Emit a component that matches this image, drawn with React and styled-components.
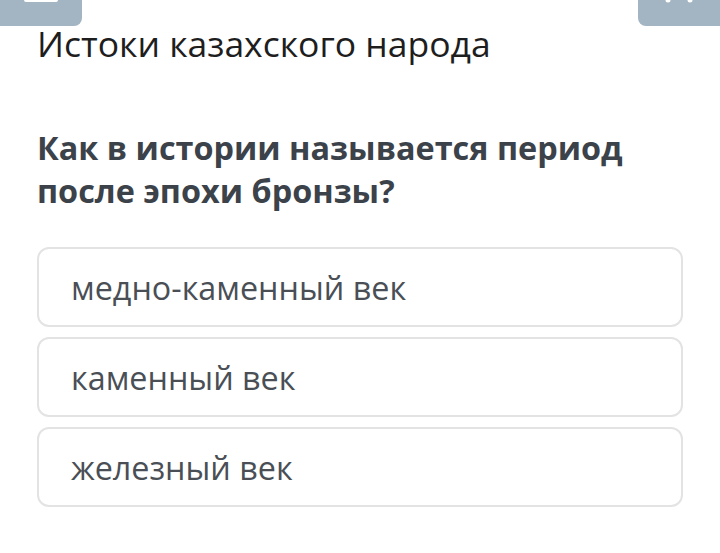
import React from 'react'
import styled, { createGlobalStyle } from 'styled-components'

const GlobalStyle = createGlobalStyle`
  body {
    margin: 0;
    background: #ffffff;
    font-family: "Open Sans", "Noto Sans", sans-serif;
  }
`

const options = ['медно-каменный век', 'каменный век', 'железный век']

const App = () => {
  return (
    <Page>
      <GlobalStyle />
      <TopBar>
        <NavButton side="left">
          <svg width="34" height="26" viewBox="0 0 34 26">
            <rect x="0" y="-2" width="34" height="4" rx="2" fill="#fff" />
          </svg>
        </NavButton>
        <NavButton side="right">
          <svg width="30" height="26" viewBox="0 0 30 26">
            <circle cx="4" cy="0" r="2.5" fill="#fff" />
            <circle cx="26" cy="0" r="2.5" fill="#fff" />
          </svg>
        </NavButton>
      </TopBar>
      <Content>
        <Title>Истоки казахского народа</Title>
        <Question>Как в истории называется период после эпохи бронзы?</Question>
        <OptionList>
          {options.map((o, i) => (
            <Option key={i}>{o}</Option>
          ))}
        </OptionList>
      </Content>
    </Page>
  )
}

export default App

const Page = styled.div`
  width: 720px;
  height: 553px;
  overflow: hidden;
`

const TopBar = styled.div`
  display: flex;
  justify-content: space-between;
  height: 26px;
`

const NavButton = styled.div`
  width: 82px;
  height: 26px;
  background: #a3b5c2;
  border-radius: ${props => props.side === 'left' ? '0 0 8px 0' : '0 0 0 8px'};
  display: flex;
  justify-content: center;
  align-items: flex-start;
  svg {
    display: block;
  }
`

const Content = styled.div`
  padding: 0 37px;
`

const Title = styled.h1`
  margin: -3px 0 0;
  font-size: 35.5px;
  font-weight: 400;
  line-height: 40px;
  color: #1e1e1e;
`

const Question = styled.h2`
  margin: 63px 0 0;
  font-size: 32.4px;
  font-weight: 700;
  line-height: 43px;
  color: #3c424a;
`

const OptionList = styled.div`
  display: flex;
  flex-direction: column;
  gap: 10px;
  margin-top: 35px;
`

const Option = styled.div`
  box-sizing: border-box;
  height: 80px;
  display: flex;
  align-items: center;
  padding: 0 32px;
  border: 2px solid #e3e3e3;
  border-radius: 12px;
  font-size: 32.3px;
  color: #4a4f56;
`
